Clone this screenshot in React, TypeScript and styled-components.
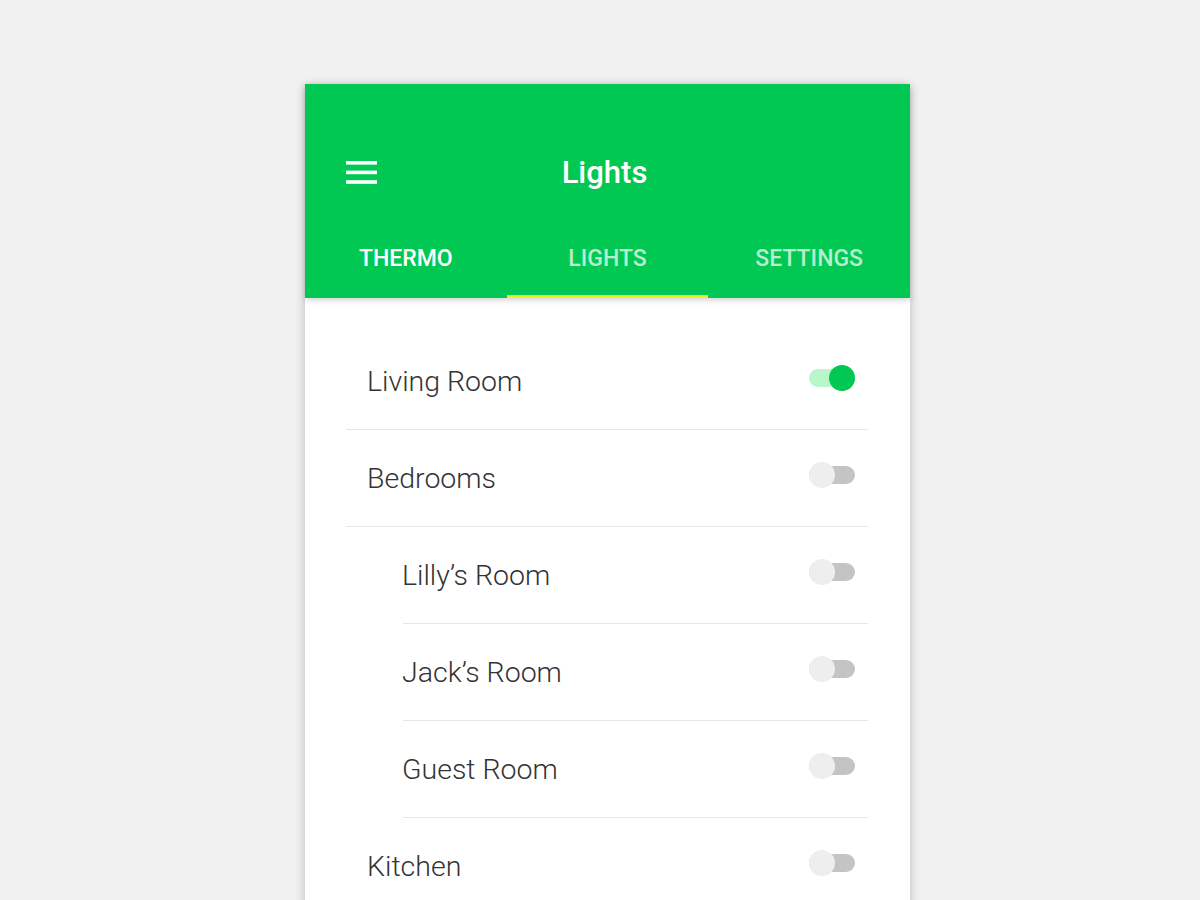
import React from "react";
import styled, { createGlobalStyle } from "styled-components";

const Global = createGlobalStyle`
  html, body { margin: 0; padding: 0; background: #f1f1f1; }
  body { font-family: Roboto, "Noto Sans", sans-serif; height: 900px; overflow: hidden; }
`;

const Page = styled.div`
  padding-top: 84px;
  padding-left: 305px;
  display: flex;
`;

const Card = styled.div`
  width: 605px;
  background: #fff;
  box-shadow: 0 2px 10px rgba(0, 0, 0, 0.22);
  min-height: 900px;
`;

const Header = styled.header`
  background: #00c853;
  height: 214px;
  padding-top: 56px;
  box-sizing: border-box;
  position: relative;
  box-shadow: 0 2px 6px rgba(0, 0, 0, 0.18);
  z-index: 1;
`;

const Toolbar = styled.div`
  height: 64px;
  display: grid;
  grid-template-columns: 1fr auto 1fr;
  align-items: center;
`;

const MenuButton = styled.div`
  padding-left: 41px;
  display: flex;
  align-items: center;
`;

const Title = styled.h1`
  margin: 0 0 0 -6px;
  color: #fff;
  font-size: 31px;
  font-weight: 500;
  line-height: 1;
`;

const Tabs = styled.div`
  display: grid;
  grid-template-columns: repeat(3, 1fr);
  height: 94px;
`;

const Tab = styled.div<{ $active?: boolean; $dim?: boolean }>`
  box-sizing: border-box;
  height: 94px;
  padding-top: 31px;
  text-align: center;
  line-height: 48px;
  font-size: 23px;
  font-weight: 500;
  color: ${(p) => (p.$dim ? "rgba(255,255,255,0.72)" : "#fff")};
  border-bottom: 3px solid ${(p) => (p.$active ? "#eef21c" : "transparent")};
`;

const List = styled.ul`
  list-style: none;
  margin: 0;
  padding: 35px 42px 0 41px;
`;

const Row = styled.li<{ $nested?: boolean }>`
  height: 96px;
  display: flex;
  align-items: center;
  justify-content: space-between;
  border-bottom: 1px solid #e6e6e6;
  margin-left: ${(p) => (p.$nested ? "57px" : "0")};
  padding-left: ${(p) => (p.$nested ? "0" : "22px")};
  padding-right: 13px;
`;

const Label = styled.span`
  font-size: 28.5px;
  font-weight: 300;
  color: #333;
  margin-top: 0;
  margin-left: -1px;
`;

const Switch = styled.div`
  position: relative;
  width: 46px;
  height: 26px;
  margin-top: -6px;
`;

const Track = styled.div<{ $on?: boolean }>`
  position: absolute;
  left: 0;
  right: 0;
  top: 4px;
  height: 18px;
  border-radius: 9px;
  background: ${(p) => (p.$on ? "#b9f6ca" : "#c4c4c4")};
`;

const Thumb = styled.div<{ $on?: boolean }>`
  position: absolute;
  top: 0;
  ${(p) => (p.$on ? "right: 0;" : "left: 0;")}
  width: 26px;
  height: 26px;
  border-radius: 50%;
  background: ${(p) => (p.$on ? "#00c853" : "#eeeeee")};
`;

const Toggle = ({ on }: { on?: boolean }) => (
  <Switch>
    <Track $on={on} />
    <Thumb $on={on} />
  </Switch>
);

const MenuIcon = () => (
  <svg width="31" height="23" viewBox="0 0 31 23">
    <rect x="0" y="0" width="31" height="3.6" fill="#fff" />
    <rect x="0" y="9.6" width="31" height="3.6" fill="#fff" />
    <rect x="0" y="19.2" width="31" height="3.6" fill="#fff" />
  </svg>
);

const rooms: { name: string; nested?: boolean; on?: boolean }[] = [
  { name: "Living Room", on: true },
  { name: "Bedrooms" },
  { name: "Lilly’s Room", nested: true },
  { name: "Jack’s Room", nested: true },
  { name: "Guest Room", nested: true },
  { name: "Kitchen" },
];

export default function App() {
  return (
    <>
      <Global />
      <Page>
        <Card>
          <Header>
            <Toolbar>
              <MenuButton>
                <MenuIcon />
              </MenuButton>
              <Title>Lights</Title>
              <div />
            </Toolbar>
            <Tabs>
              <Tab>THERMO</Tab>
              <Tab $active $dim>LIGHTS</Tab>
              <Tab $dim>SETTINGS</Tab>
            </Tabs>
          </Header>
          <List>
            {rooms.map((r) => (
              <Row key={r.name} $nested={r.nested}>
                <Label>{r.name}</Label>
                <Toggle on={r.on} />
              </Row>
            ))}
          </List>
        </Card>
      </Page>
    </>
  );
}
